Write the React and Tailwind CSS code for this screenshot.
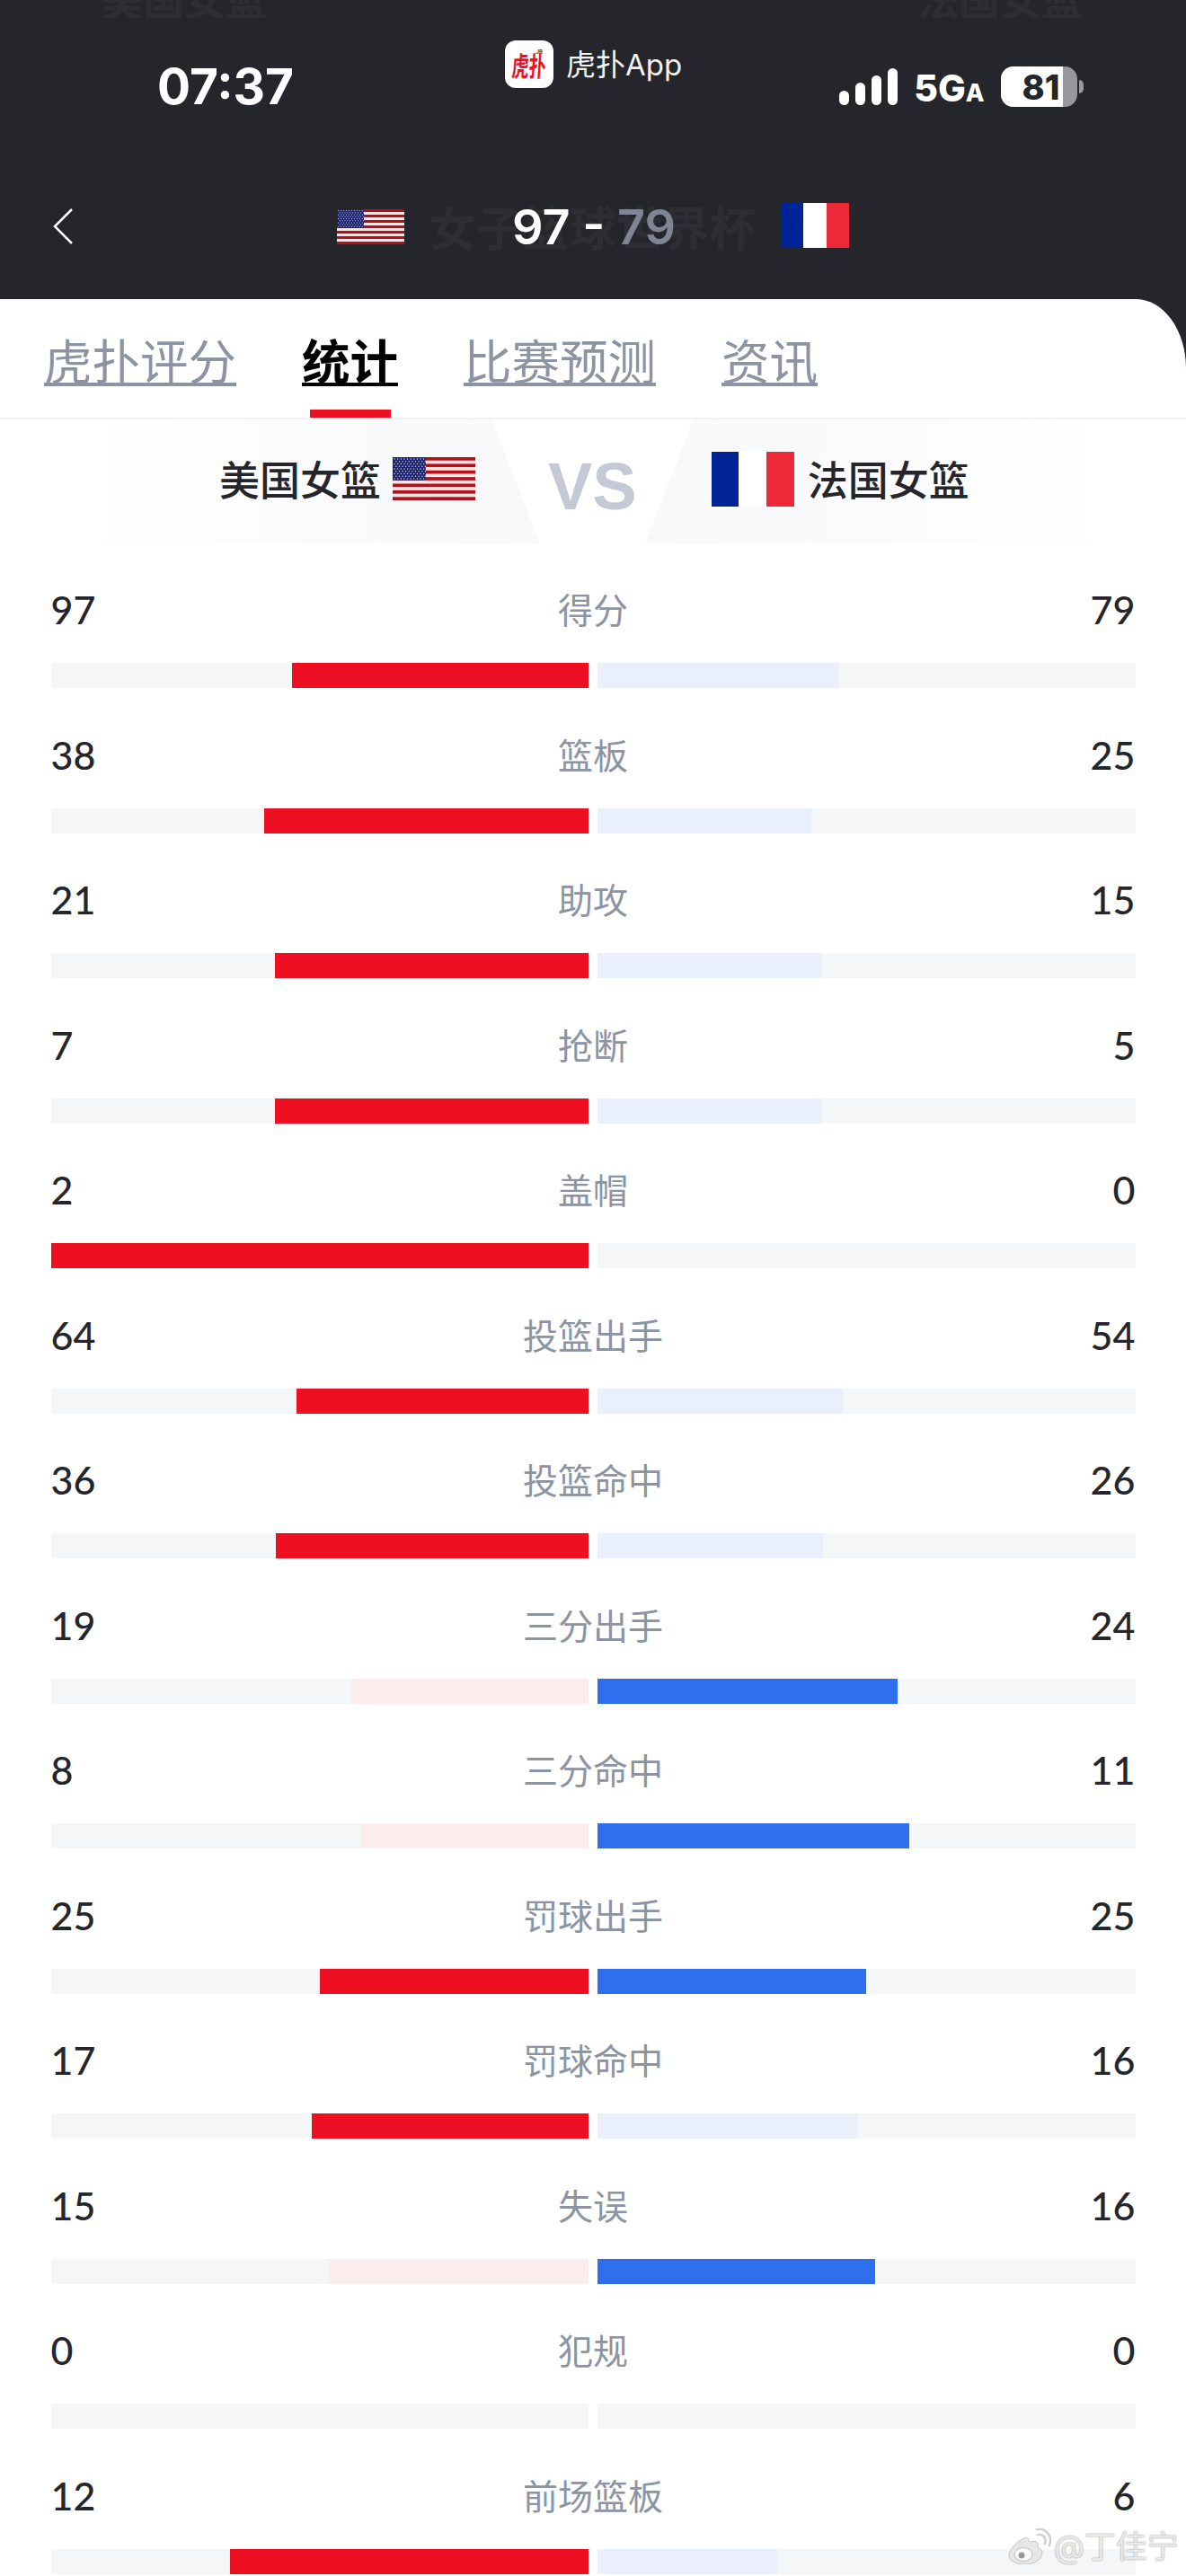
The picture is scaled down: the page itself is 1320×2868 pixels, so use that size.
import React from "react";

const CJK = "font-['Inter','Noto_Sans_CJK_SC',sans-serif]";

const stats = [
  ["得分", 97, 79],
  ["篮板", 38, 25],
  ["助攻", 21, 15],
  ["抢断", 7, 5],
  ["盖帽", 2, 0],
  ["投篮出手", 64, 54],
  ["投篮命中", 36, 26],
  ["三分出手", 19, 24],
  ["三分命中", 8, 11],
  ["罚球出手", 25, 25],
  ["罚球命中", 17, 16],
  ["失误", 15, 16],
  ["犯规", 0, 0],
  ["前场篮板", 12, 6],
];

const tabs = ["虎扑评分", "统计", "比赛预测", "资讯"];

// us flag, stripes and canton
const UsFlag = ({ className }) => (
  <svg className={className} viewBox="0 0 130 68" preserveAspectRatio="none">
    <rect width="130" height="68" fill="#f6e4e4" />
    {[0, 2, 4, 6, 8, 10, 12].map((i) => (
      <rect key={i} y={(i * 68) / 13} width="130" height={68 / 13} fill="#b4101c" />
    ))}
    <rect width="52" height="36.6" fill="#1b2270" />
    {[0, 1, 2, 3, 4, 5, 6, 7, 8].map((r) =>
      [0, 1, 2, 3, 4, 5, 6, 7, 8, 9].map((c) => (
        <circle
          key={r + "-" + c}
          cx={3 + c * 5.1 + (r % 2) * 2.4}
          cy={2.8 + r * 3.9}
          r="1"
          fill="#dfe0f0"
        />
      ))
    )}
  </svg>
);

const FrFlag = ({ className }) => (
  <div className={"flex " + className}>
    <div className="flex-1 bg-[#002395]" />
    <div className="flex-1 bg-white" />
    <div className="flex-1 bg-[#ed2939]" />
  </div>
);

const StatRow = ({ label, a, b }) => {
  const total = a + b;
  const left = total ? (a / total) * 100 : 0;
  const right = total ? (b / total) * 100 : 0;
  return (
    <div className="h-[161.5px]">
      <div className="grid grid-cols-3 items-center h-[60px]">
        <div className="pb-[1px] text-[43px] leading-none font-medium text-[#25262b] font-['Lato',sans-serif]">{a}</div>
        <div className="pb-[3px] text-[39px] leading-none text-center text-[#8c93a3] font-['Noto_Sans_CJK_SC',sans-serif]">
          {label}
        </div>
        <div className="pb-[1px] text-[43px] leading-none font-medium text-right text-[#25262b] font-['Lato',sans-serif]">{b}</div>
      </div>
      <div className="flex gap-[10px] mt-[29px]">
        <div className="flex-1 h-[28px] bg-[#f5f6f8] flex justify-end">
          <div
            className={a >= b ? "h-full bg-[#ee0f23]" : "h-full bg-[#fbeced]"}
            style={{ width: left + "%" }}
          />
        </div>
        <div className="flex-1 h-[28px] bg-[#f5f6f8]">
          <div
            className={b >= a ? "h-full bg-[#2f6fed]" : "h-full bg-[#e9effb]"}
            style={{ width: right + "%" }}
          />
        </div>
      </div>
    </div>
  );
};

export default function App() {
  return (
    <div className="relative w-[1320px] h-[2868px] overflow-hidden bg-[#25262b]">
      {/* top of the header, page scrolled under the status bar */}
      <div className="h-[20px] overflow-hidden flex items-end justify-between pl-[113px] pr-[115px]">
        <div className="text-[46px] leading-none font-bold text-[#2c2e33] font-['Noto_Sans_CJK_SC',sans-serif]">美国女篮</div>
        <div className="text-[46px] leading-none font-bold text-[#2c2e33] font-['Noto_Sans_CJK_SC',sans-serif]">法国女篮</div>
      </div>

      {/* status bar */}
      <div className="h-[112px] flex items-start pl-[175px] text-white">
        <div className="mt-[49px] w-[387px] text-[55px] leading-none font-bold font-['Inter',sans-serif]">07:37</div>
        <div className="mt-[25px] flex items-center">
          <div className="relative w-[54px] h-[53px] rounded-[12px] bg-white flex items-center justify-center">
            <span className="text-[19px] leading-none font-bold text-[#ee0f23] whitespace-nowrap scale-y-[1.6] -skew-x-6 font-['Noto_Sans_CJK_SC',sans-serif]">
              虎扑
            </span>
            <span className="absolute top-[10px] right-[12px] text-[6px] leading-none font-bold text-[#444] font-['Inter',sans-serif]">JR</span>
          </div>
          <div className={"ml-[14px] mt-[2px] text-[33px] leading-none text-[#f2f2f2] " + CJK}>虎扑App</div>
        </div>
        <div className="ml-[175px] mt-[56px] flex items-end gap-[7px]">
          <div className="w-[11px] h-[16px] rounded-full bg-white" />
          <div className="w-[11px] h-[25px] rounded-full bg-white" />
          <div className="w-[11px] h-[33px] rounded-full bg-white" />
          <div className="w-[11px] h-[41px] rounded-full bg-white" />
        </div>
        <div className="ml-[18px] mt-[58px] flex items-baseline font-extrabold leading-none font-['Inter',sans-serif]">
          <span className="text-[41px] leading-none">5G</span>
          <span className="text-[27px] leading-none">A</span>
        </div>
        <div className="ml-[18px] mt-[54px] flex items-center">
          <div className="w-[85px] h-[45px] rounded-[14px] overflow-hidden bg-[#98989c]">
            <div className="w-[69px] h-full bg-white flex items-center justify-end text-[38px] leading-none font-extrabold text-[#25262b] font-['Inter',sans-serif]">
              <span className="mr-[3px]">81</span>
            </div>
          </div>
          <div className="ml-[2px] w-[5px] h-[15px] rounded-r-full bg-[#98989c]" />
        </div>
      </div>

      {/* match header */}
      <div className="h-[201px] pt-[95px] flex items-start">
        <svg className="ml-[59px] mt-[5px] w-[22px] h-[40px]" viewBox="0 0 22 40" fill="none">
          <path d="M21 1 L2 20 L21 39" stroke="#fff" strokeWidth="2.5" />
        </svg>
        <UsFlag className="ml-[294px] mt-[6px] w-[75px] h-[39px]" />
        <div className="relative w-[419px] h-[50px] flex items-center justify-center font-['Inter',sans-serif] font-semibold">
          <div className="absolute inset-0 flex items-center justify-center text-[52px] leading-none font-bold text-[#2c2e33] whitespace-nowrap font-['Noto_Sans_CJK_SC',sans-serif]">
            女子篮球世界杯
          </div>
          <div className="relative mt-[2px] ml-[3px] text-[54px] leading-none whitespace-nowrap">
            <span className="text-white">97 - </span>
            <span className="text-[#7f8594]">79</span>
          </div>
        </div>
        <FrFlag className="w-[76px] h-[50px] mt-[-1px]" />
      </div>

      {/* white panel */}
      <div className="bg-white rounded-tr-[56px_77px] h-[2535px]">
        <div className="h-[132px] pt-[40px] pl-[49px] flex gap-[73px] font-['Noto_Sans_CJK_SC',sans-serif]">
          {tabs.map((t) => (
            <div key={t} className="h-[92px] flex flex-col items-center">
              <span
                className={
                  t === "统计"
                    ? "text-[53.5px] leading-none font-bold text-black underline decoration-4 underline-offset-[3px]"
                    : "text-[53.5px] leading-none text-[#8c93a3] underline decoration-4 underline-offset-[3px]"
                }
              >
                {t}
              </span>
              {t === "统计" && <div className="mt-auto w-[90px] h-[9px] bg-[#ee0f23]" />}
            </div>
          ))}
        </div>
        <div className="h-[2px] bg-[#f0f0f5]" />

        {/* teams row */}
        <div className="relative h-[138px] flex items-center pl-[244px] pb-[8px] font-['Noto_Sans_CJK_SC',sans-serif]">
          <div className="absolute top-0 bottom-0 left-[70px] w-[531px] bg-linear-to-r from-white to-[#f7f8fa] [clip-path:polygon(0_0,477px_0,100%_100%,0_100%)]" />
          <div className="absolute top-0 bottom-0 left-[718px] w-[542px] bg-linear-to-l from-white to-[#f7f8fa] [clip-path:polygon(54px_0,100%_0,100%_100%,0_100%)]" />
          <div className="relative text-[45px] leading-none font-medium text-[#25262b]">美国女篮</div>
          <UsFlag className="relative mt-[2px] ml-[13px] w-[92px] h-[48px]" />
          <div className="relative ml-[81px] mt-[20px] text-[74px] leading-none font-bold text-[#c5c9d6] font-['Liberation_Sans',sans-serif]">VS</div>
          <FrFlag className="relative mt-[2px] ml-[83px] w-[92px] h-[61px]" />
          <div className="relative ml-[15px] text-[45px] leading-none font-medium text-[#25262b]">法国女篮</div>
        </div>

        {/* stats */}
        <div className="pt-[44px] px-[56.5px]">
          {stats.map(([label, a, b]) => (
            <StatRow key={label} label={label} a={a} b={b} />
          ))}
        </div>
      </div>

      {/* weibo watermark */}
      <div className="absolute left-[1122px] top-[2815px] flex items-center">
        <svg className="w-[48px] h-[40px]" viewBox="0 0 48 40" fill="none">
          <path d="M20 10 C10 14 1 23 1 30 C1 36 9 40 19 40 C30 40 38 34 38 27 C38 23 33 22 33 21 C35 16 31 13 25 15 C22 16 24 11 20 10 Z" fill="#e6e6e6" stroke="#c4c4c4" strokeWidth="1" />
          <ellipse cx="17" cy="29" rx="10" ry="7.5" fill="#fafafa" stroke="#bdbdbd" strokeWidth="1" />
          <circle cx="15" cy="30" r="3.5" fill="#9a9a9a" />
          <path d="M33 7 C39 6 43 11 41 17 M32 1 C42 -1 50 9 46 19" stroke="#cfcfcf" strokeWidth="2.5" strokeLinecap="round" />
        </svg>
        <div className="ml-[3px] text-[35px] leading-none text-[#e8e8e8] [text-shadow:0_0_2px_rgba(0,0,0,0.45)] font-['Inter','Noto_Sans_CJK_SC',sans-serif]">
          @丁佳宁
        </div>
      </div>
    </div>
  );
}
